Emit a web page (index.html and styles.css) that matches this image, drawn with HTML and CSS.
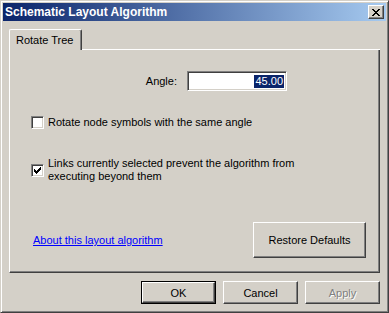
FILE: index.html
```html
<!DOCTYPE html>
<html>
<head>
<meta charset="utf-8">
<link rel="stylesheet" href="styles.css">
</head>
<body>
<div class="win">
  <div class="titlebar">
    <span class="title">Schematic Layout Algorithm</span>
    <span class="close"><svg width="8" height="7" viewBox="0 0 8 7" shape-rendering="crispEdges"><path d="M0 0h2v1H0zM6 0h2v1H6zM1 1h2v1H1zM5 1h2v1H5zM2 2h4v1H2zM3 3h2v1H3zM2 4h4v1H2zM1 5h2v1H1zM5 5h2v1H5zM0 6h2v1H0zM6 6h2v1H6z" fill="#000"/></svg></span>
  </div>
  <div class="client">
    <div class="tabs">
      <div class="tab">Rotate Tree</div>
      <div class="tabfill"></div>
    </div>
    <div class="panel">
      <div class="angle-row">
        <span class="angle-label">Angle:</span>
        <div class="field"><span class="sel">45.00</span></div>
      </div>
      <div class="check-row r1">
        <span class="cb"></span>
        <span class="cb-text">Rotate node symbols with the same angle</span>
      </div>
      <div class="check-row r2">
        <span class="cb"><svg width="7" height="7" viewBox="0 0 7 7" shape-rendering="crispEdges"><path d="M0 2h1v3H0zM1 3h1v3H1zM2 4h1v3H2zM3 3h1v3H3zM4 2h1v3H4zM5 1h1v3H5zM6 0h1v3H6z" fill="#000"/></svg></span>
        <span class="cb-text wrap">Links currently selected prevent the algorithm from executing beyond them</span>
      </div>
      <div class="bottom-row">
        <a class="link" href="#">About this layout algorithm</a>
        <span class="btn restore">Restore Defaults</span>
      </div>
    </div>
    <div class="buttons">
      <span class="btn default"><span class="inner">OK</span></span>
      <span class="btn">Cancel</span>
      <span class="btn disabled">Apply</span>
    </div>
  </div>
</div>
</body>
</html>
```
FILE: styles.css
```css
html, body {
  margin: 0;
  padding: 0;
}
body {
  font-family: "Liberation Sans", Arial, sans-serif;
  font-size: 11px;
  color: #000;
  background: #d4d0c8;
}
.win {
  box-sizing: border-box;
  width: 389px;
  height: 313px;
  background: #d4d0c8;
  border: 1px solid;
  border-color: #d4d0c8 #404040 #404040 #d4d0c8;
  box-shadow: inset 1px 1px #fff, inset -1px -1px #808080;
  padding: 2px;
  display: flex;
  flex-direction: column;
}
.titlebar {
  height: 18px;
  flex: 0 0 18px;
  background: linear-gradient(to right, #0a246a, #a6caf0);
  display: flex;
  align-items: center;
  justify-content: space-between;
}
.title {
  color: #fff;
  font-weight: bold;
  font-size: 12px;
  padding-left: 2px;
  line-height: 18px;
}
.close {
  box-sizing: border-box;
  width: 16px;
  height: 14px;
  margin-right: 2px;
  background: #d4d0c8;
  border: 1px solid;
  border-color: #fff #404040 #404040 #fff;
  box-shadow: inset -1px -1px #808080;
  display: flex;
  align-items: center;
  justify-content: center;
  padding-right: 1px;
}
.close svg { display: block; }
.client {
  flex: 1;
  padding: 8px 6px 6px 6px;
  display: flex;
  flex-direction: column;
}
.tabs {
  display: flex;
  height: 21px;
  flex: 0 0 21px;
}
.tab {
  box-sizing: border-box;
  width: 73px;
  height: 21px;
  border-top: 1px solid #fff;
  border-left: 1px solid #fff;
  border-right: 1px solid #404040;
  border-top-left-radius: 2px;
  border-top-right-radius: 2px;
  box-shadow: inset -1px 0 #808080;
  padding-left: 6px;
  display: flex;
  align-items: center;
  padding-bottom: 1px;
}
.tabfill {
  flex: 1;
  border-bottom: 1px solid #fff;
}
.panel {
  box-sizing: border-box;
  height: 223px;
  flex: 0 0 223px;
  border-left: 1px solid #fff;
  border-right: 1px solid #404040;
  border-bottom: 1px solid #404040;
  box-shadow: inset -1px -1px #808080;
  display: flex;
  flex-direction: column;
  padding: 0 13px 14px 0;
}
.angle-row {
  display: flex;
  align-items: center;
  margin-top: 21px;
  height: 20px;
}
.angle-label {
  width: 167px;
  text-align: right;
  margin-right: 10px;
}
.field {
  box-sizing: border-box;
  width: 100px;
  height: 20px;
  background: #fff;
  border: 1px solid;
  border-color: #808080 #fff #fff #808080;
  box-shadow: inset 1px 1px #404040, inset -1px -1px #d4d0c8;
  display: flex;
  align-items: center;
  justify-content: flex-end;
  padding-right: 2px;
}
.sel {
  background: #0a246a;
  color: #fff;
  line-height: 13px;
  padding: 0 1px;
}
.check-row {
  display: flex;
  align-items: center;
  margin-left: 21px;
}
.r1 { margin-top: 25px; }
.r2 { margin-top: 28px; }
.cb {
  box-sizing: border-box;
  width: 13px;
  height: 13px;
  flex: 0 0 13px;
  background: #fff;
  border: 1px solid;
  border-color: #808080 #fff #fff #808080;
  box-shadow: inset 1px 1px #404040, inset -1px -1px #d4d0c8;
  padding: 2px 0 0 2px;
  margin-right: 4px;
}
.cb svg { display: block; }
.cb-text {
  line-height: 13px;
}
.wrap {
  width: 290px;
}
.bottom-row {
  margin-top: auto;
  display: flex;
  align-items: center;
  justify-content: space-between;
  padding-left: 23px;
}
.link {
  color: #0000ff;
  text-decoration: underline;
}
.btn {
  box-sizing: border-box;
  width: 75px;
  height: 23px;
  background: #d4d0c8;
  border: 1px solid;
  border-color: #fff #404040 #404040 #fff;
  box-shadow: inset -1px -1px #808080;
  display: flex;
  align-items: center;
  justify-content: center;
}
.restore {
  width: 113px;
  height: 36px;
}
.buttons {
  margin-top: 8px;
  display: flex;
  justify-content: flex-end;
  gap: 7px;
}
.btn.default {
  border: 1px solid #000;
  box-shadow: none;
  padding: 0;
}
.btn.default .inner {
  box-sizing: border-box;
  width: 100%;
  height: 100%;
  border: 1px solid;
  border-color: #fff #404040 #404040 #fff;
  box-shadow: inset -1px -1px #808080;
  display: flex;
  align-items: center;
  justify-content: center;
}
.btn.disabled {
  color: #808080;
  text-shadow: 1px 1px 0 #fff;
}
```
